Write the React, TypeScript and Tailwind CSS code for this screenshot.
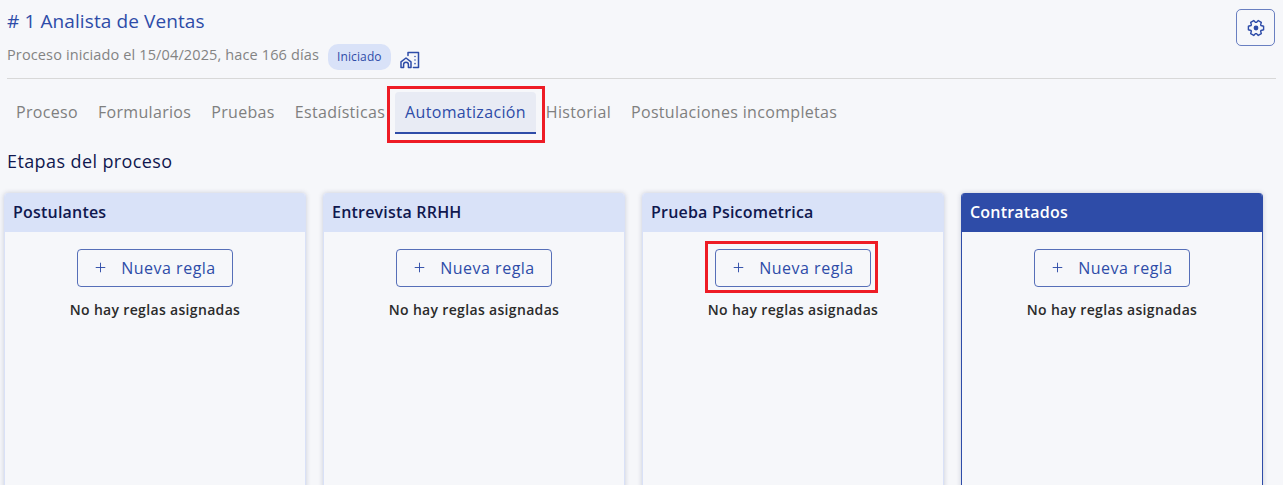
import React from 'react'
import { Plus } from 'lucide-react'

const tabs = ['Proceso', 'Formularios', 'Pruebas', 'Estadísticas', 'Automatización', 'Historial', 'Postulaciones incompletas']

const stages = ['Postulantes', 'Entrevista RRHH', 'Prueba Psicometrica', 'Contratados']

function HomeWorkIcon () {
  return (
    <svg width="20" height="20" viewBox="0 0 20 20" fill="none" stroke="#2e4ca8" strokeWidth="1.5" strokeLinecap="round" strokeLinejoin="round">
      <path d="M1 17.5v-5.6L6 8l5 3.9v5.6H8.4v-2.9a2.4 2.4 0 0 0-4.8 0v2.9z" />
      <path d="M8 5.4V2.6h10.5v14.9H13.4" />
      <path d="M15 6.4v.1M15 10v.1M15 13.6v.1" />
    </svg>
  )
}

// engranaje de 6 dientes, con el centro relleno
function GearIcon () {
  const pt = (r: number, deg: number) => {
    const a = deg * Math.PI / 180
    return `${(10 + r * Math.cos(a)).toFixed(2)} ${(10 + r * Math.sin(a)).toFixed(2)}`
  }
  const d = [0, 60, 120, 180, 240, 300].map(a =>
    `${a === 0 ? 'M' : 'L'}${pt(7.8, a - 13)} L${pt(7.8, a + 13)} L${pt(5.6, a + 26)} L${pt(5.6, a + 34)}`
  ).join(' ') + ' Z'
  return (
    <svg width="20" height="20" viewBox="0 0 20 20" fill="none" stroke="#2e4ca8" strokeWidth="1.4" strokeLinejoin="round">
      <path d={d} />
      <circle cx="10" cy="10" r="2.4" fill="#2e4ca8" stroke="none" />
    </svg>
  )
}

function Stage ({ name, active }: { name: string, active: boolean }) {
  return (
    <div className={`h-[300px] overflow-hidden rounded-t-[4px] border-x shadow-[0_0_5px_rgba(40,50,90,0.22)] ${active ? 'border-[#2e4ca8]' : 'border-[#d9e1f7]'}`}>
      <div className={`h-[39px] pl-[8px] pb-[2px] flex items-center text-[16px] tracking-[0.2px] font-semibold ${active ? 'bg-[#2e4ca8] text-white' : 'bg-[#d9e2f8] text-[#10184f]'}`}>
        {name}
      </div>
      <div className="flex flex-col items-center pt-[17px]">
        <button className="w-[156px] mr-[1px] h-[38px] pb-[1px] flex items-center justify-center gap-[13px] rounded-[4px] border border-[#2e4ca8]/80 text-[16px] tracking-[0.5px] text-[#2e4ca8]">
          <Plus size={15} strokeWidth={1.5} />
          Nueva regla
        </button>
        <p className="mt-[13px] text-[14px] leading-[20px] tracking-[0.33px] font-semibold text-[#2b2b2b]">No hay reglas asignadas</p>
      </div>
    </div>
  )
}

export default function App () {
  return (
    <div className="relative h-[485px] overflow-hidden bg-[#f6f7fa] font-['Open_Sans','Noto_Sans',sans-serif]">
      <div className="mx-[7px] h-[79px] border-b border-[#d8d8d8] flex justify-between">
        <div>
          <h1 className="pt-[8px] text-[19px] leading-[27px] tracking-[0.1px] text-[#2e4ca8]"># 1 Analista de Ventas</h1>
          <div className="mt-[9px] flex items-center text-[14.5px] tracking-[0.13px] text-[#838383]">
            <span className="pb-[5px]">Proceso iniciado el 15/04/2025, hace 166 días</span>
            <span className="ml-[9px] h-[26px] px-[9px] flex items-center rounded-[10px] bg-[#d9e2f8] text-[12px] text-[#2e4ca8]">Iniciado</span>
            <span className="ml-[9px] mt-[5px]"><HomeWorkIcon /></span>
          </div>
        </div>
        <button className="mt-[9px] mr-[1px] w-[39px] h-[37px] flex items-center justify-center rounded-[5px] border border-[#2e4ca8]/70">
          <GearIcon />
        </button>
      </div>

      <div className="flex pl-[6px] pt-[13px]">
        {tabs.map(tab => (
          <div
            key={tab}
            className={`h-[42px] px-[10px] flex items-center text-[16px] font-medium tracking-[0.32px] rounded-t-[4px] border-b-2 ${tab === 'Automatización' ? 'bg-[#e8ebf4] text-[#2e4ca8] border-[#2e4ca8]' : 'text-[#7f7f7f] border-transparent'}`}
          >
            {tab}
          </div>
        ))}
      </div>

      <h2 className="ml-[7px] mt-[15px] text-[18px] leading-[24px] tracking-[0.4px] text-[#10184f]">Etapas del proceso</h2>

      <div className="mt-[20px] ml-[4px] w-[1259px] grid grid-cols-4 gap-[17px]">
        {stages.map(stage => <Stage key={stage} name={stage} active={stage === 'Contratados'} />)}
      </div>

      {/* anotaciones rojas */}
      <div className="absolute left-[387px] top-[86px] w-[158px] h-[57px] border-[3px] border-[#ee1c25]" />
      <div className="absolute left-[705px] top-[241px] w-[173px] h-[52px] border-[3px] border-[#ee1c25]" />
    </div>
  )
}
